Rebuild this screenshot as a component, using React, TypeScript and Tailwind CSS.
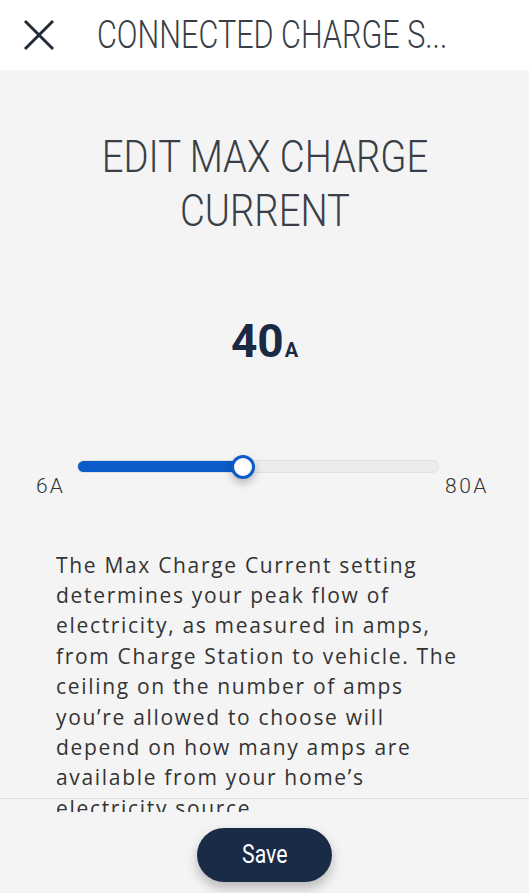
const description =
    'The Max Charge Current setting determines your peak flow of electricity, as measured in amps, from Charge Station to vehicle. The ceiling on the number of amps you\u2019re allowed to choose will depend on how many amps are available from your home\u2019s electricity source.';

function CloseIcon() {
    return (
        <svg viewBox="0 0 32 32" className="size-[32px] shrink-0 text-[#222b38]" fill="none" stroke="currentColor" strokeWidth={3}>
            <path d="M2 2L30 30M30 2L2 30" />
        </svg>
    );
}

export default function App() {
    const min = 6;
    const max = 80;
    const value = 40;
    const pct = ((value - min) / (max - min)) * 100;

    return (
        <div className="h-[893px] w-full flex flex-col bg-[#f4f4f4] font-['Roboto',sans-serif]">
            {/* header */}
            <header className="h-[70px] shrink-0 bg-white flex items-center pl-[23px] overflow-hidden">
                <CloseIcon />
                <h2 className="ml-[42px] origin-left scale-x-[0.805] whitespace-nowrap text-[38px] font-light text-[#3a3f47] leading-none">
                    CONNECTED CHARGE S...
                </h2>
            </header>

            <main className="relative flex-1 overflow-hidden">
                <div className="flex flex-col items-center pt-[60px]">
                    <h1 className="text-center text-[44px] leading-[54px] font-light text-[#3a3f47] scale-x-[0.87] w-[640px]">
                        EDIT MAX CHARGE
                        <br />
                        CURRENT
                    </h1>

                    <div className="mt-[80px] flex items-baseline text-[#1b2a44] font-bold">
                        <span className="text-[46px] leading-none">{value}</span>
                        <span className="ml-[1px] text-[20px] leading-none">A</span>
                    </div>
                </div>

                {/* slider */}
                <div className="mt-[96px] flex items-start pl-[36px] pr-[40px]">
                    <span className="mt-[11px] text-[21px] font-light tracking-[0.1em] text-[#333]">6A</span>
                    <div className="relative flex-1 ml-[12px] mr-[6px] h-[13px] rounded-full bg-[#ececec] border border-[#e0e0e0]">
                        <div className="h-full rounded-full bg-[#0b5bc8]" style={{ width: `${pct}%` }} />
                        <div
                            className="absolute top-1/2 size-[24px] -translate-x-1/2 -translate-y-1/2 rounded-full bg-white border-[3px] border-[#0b5bc8] shadow-[0_4px_8px_rgba(0,0,0,0.25)]"
                            style={{ left: `${pct}%` }}
                        />
                    </div>
                    <span className="mt-[11px] text-[21px] font-light tracking-[0.12em] text-[#333]">80A</span>
                </div>

                <p className="mt-[47px] px-[56px] text-[21px] leading-[30.4px] tracking-[0.08em] text-[#333] font-['Open_Sans',sans-serif]">
                    {description}
                </p>

                <div className="absolute bottom-[13px] left-0 right-0 h-px bg-[#dcdcdc]" />
            </main>

            <footer className="h-[81px] shrink-0 flex justify-center pt-[16px]">
                <button
                    type="button"
                    className="h-[54px] w-[135px] rounded-full bg-[#1a2b48] text-white shadow-[0_6px_12px_rgba(0,0,0,0.25)]"
                >
                    <span className="inline-block scale-x-[0.85] text-[25px]">Save</span>
                </button>
            </footer>
        </div>
    );
}
